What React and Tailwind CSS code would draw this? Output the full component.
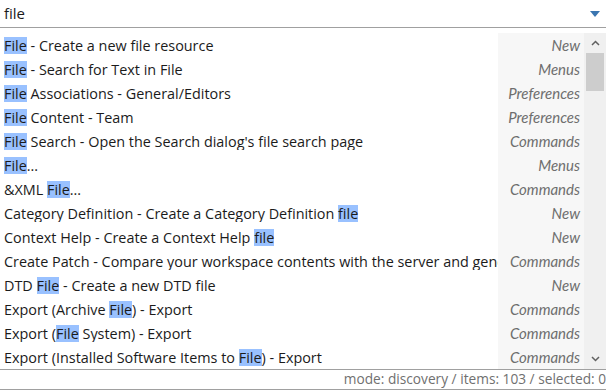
import React from "react";

const rows = [
  { parts: [["File", true], [" - Create a new file resource", false]], cat: "New" },
  { parts: [["File", true], [" - Search for Text in File", false]], cat: "Menus" },
  { parts: [["File", true], [" Associations - General/Editors", false]], cat: "Preferences" },
  { parts: [["File", true], [" Content - Team", false]], cat: "Preferences" },
  { parts: [["File", true], [" Search - Open the Search dialog's file search page", false]], cat: "Commands" },
  { parts: [["File", true], ["...", false]], cat: "Menus" },
  { parts: [["&XML ", false], ["File", true], ["...", false]], cat: "Commands" },
  { parts: [["Category Definition - Create a Category Definition ", false], ["file", true]], cat: "New" },
  { parts: [["Context Help - Create a Context Help ", false], ["file", true]], cat: "New" },
  { parts: [["Create Patch - Compare your workspace contents with the server and generate a patch file", false]], cat: "Commands" },
  { parts: [["DTD ", false], ["File", true], [" - Create a new DTD file", false]], cat: "New" },
  { parts: [["Export (Archive ", false], ["File", true], [") - Export", false]], cat: "Commands" },
  { parts: [["Export (", false], ["File", true], [" System) - Export", false]], cat: "Commands" },
  { parts: [["Export (Installed Software Items to ", false], ["File", true], [") - Export", false]], cat: "Commands" },
];

export default function App() {
  return (
    <div className="w-[606px] h-[390px] bg-white flex flex-col overflow-hidden text-[#1b1b1b]" style={{ fontFamily: '"Open Sans", "Noto Sans", sans-serif' }}>
      <div className="h-[28px] flex items-center justify-between pl-[4px] pr-[6px] border-b border-[#a0a0a0]">
        <span className="text-[15px] leading-none">file</span>
        <svg width="10" height="6" viewBox="0 0 10 6">
          <path d="M0 0 H10 L5 6 Z" fill="#3a75b0" />
        </svg>
      </div>

      <div className="mt-[5px] h-[336px] flex">
        <div className="flex-1 flex flex-col min-w-0">
          {rows.map((r, i) => (
            <div key={i} className="h-[24px] flex items-center">
              <div className="flex-1 min-w-0 overflow-hidden whitespace-nowrap pl-[4px] text-[14.4px] leading-[17px]">
                {r.parts.map(([t, hl], j) => (
                  <span key={j} className={hl ? "bg-[#99c1ff]" : ""}>{t}</span>
                ))}
              </div>
              <div className="w-[86px] h-full bg-[#f7f7f7] flex items-center justify-end pr-[4px] text-[15px] italic text-[#6e6e6e]" style={{ fontFamily: "Lato, sans-serif" }}>
                {r.cat}
              </div>
            </div>
          ))}
        </div>
        <div className="w-[22px] bg-[#f0f0f0] flex flex-col items-center">
          <div className="h-[20px] flex items-center justify-center">
            <svg width="9" height="6" viewBox="0 0 9 6">
              <path d="M1 5 L4.5 1.5 L8 5" stroke="#606060" strokeWidth="1.5" fill="none" />
            </svg>
          </div>
          <div className="w-[18px] h-[38px] bg-[#cdcdcd]" />
          <div className="flex-1" />
          <div className="h-[20px] flex items-center justify-center">
            <svg width="9" height="6" viewBox="0 0 9 6">
              <path d="M1 1 L4.5 4.5 L8 1" stroke="#606060" strokeWidth="1.5" fill="none" />
            </svg>
          </div>
        </div>
      </div>

      <div className="h-[21px] border-t border-b border-[#a0a0a0] flex items-center justify-end text-[13.7px] text-[#707070]">
        mode: discovery / items: 103 / selected: 0
      </div>
    </div>
  );
}
